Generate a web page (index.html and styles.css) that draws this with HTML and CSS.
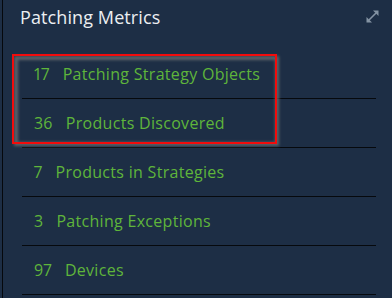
FILE: index.html
```html
<!DOCTYPE html>
<html lang="en">
<head>
<meta charset="utf-8">
<title>Patching Metrics</title>
<link rel="stylesheet" href="styles.css">
</head>
<body>
<div class="card">
  <div class="card-header">
    <h2 class="title">Patching Metrics</h2>
    <button class="expand" aria-label="Expand">
      <svg width="13" height="13" viewBox="0 0 13 13">
        <line x1="3" y1="10" x2="10" y2="3" stroke="#8493a3" stroke-width="1.6"/>
        <polygon points="12.5,0.5 12.5,6 7,0.5" fill="#8493a3"/>
        <polygon points="0.5,12.5 0.5,7 6,12.5" fill="#8493a3"/>
      </svg>
    </button>
  </div>
  <ul class="metrics">
    <li class="metric"><span class="num">17</span><span class="label">Patching Strategy Objects</span></li>
    <li class="metric"><span class="num">36</span><span class="label">Products Discovered</span></li>
    <li class="metric"><span class="num">7</span><span class="label">Products in Strategies</span></li>
    <li class="metric"><span class="num">3</span><span class="label">Patching Exceptions</span></li>
    <li class="metric"><span class="num">97</span><span class="label">Devices</span></li>
  </ul>
  <div class="highlight"></div>
</div>
</body>
</html>
```

FILE: styles.css
```css
html, body {
  margin: 0;
  padding: 0;
  background: #1d2e45;
  height: 100%;
  overflow: hidden;
}

body {
  font-family: "Open Sans", "Liberation Sans", sans-serif;
}

.card {
  position: relative;
  margin-left: 2px;
  border-left: 1px solid #05080c;
  height: 100%;
  box-sizing: border-box;
}

.card-header {
  height: 50px;
  display: flex;
  align-items: flex-start;
  justify-content: space-between;
  padding: 0 13px 0 17px;
  box-sizing: border-box;
}

.title {
  margin: 5px 0 0 0;
  font-size: 18px;
  line-height: 24px;
  font-weight: 400;
  letter-spacing: 0.1px;
  color: #eceff2;
}

.expand {
  margin-top: 10px;
  background: none;
  border: 0;
  padding: 0;
  width: 13px;
  height: 13px;
  line-height: 0;
}

.metrics {
  list-style: none;
  margin: 0 16px 0 19px;
  padding: 0;
}

.metric {
  height: 48px;
  border-bottom: 1px solid #06090d;
  display: flex;
  align-items: center;
  padding-left: 12px;
  font-size: 16px;
  letter-spacing: 0.3px;
  font-variant-numeric: proportional-nums;
  color: #5fb53b;
}

.num {
  margin-right: 13px;
}

.highlight {
  position: absolute;
  left: 9px;
  top: 54px;
  width: 265px;
  height: 90px;
  pointer-events: none;
}

.highlight::before {
  content: "";
  position: absolute;
  left: 2px;
  top: 2px;
  width: 100%;
  height: 100%;
  box-sizing: border-box;
  border: 4px solid rgba(105, 108, 112, 0.85);
  filter: blur(1.5px);
}

.highlight::after {
  content: "";
  position: absolute;
  inset: 0;
  border: 2px solid #f20c0c;
}
```
